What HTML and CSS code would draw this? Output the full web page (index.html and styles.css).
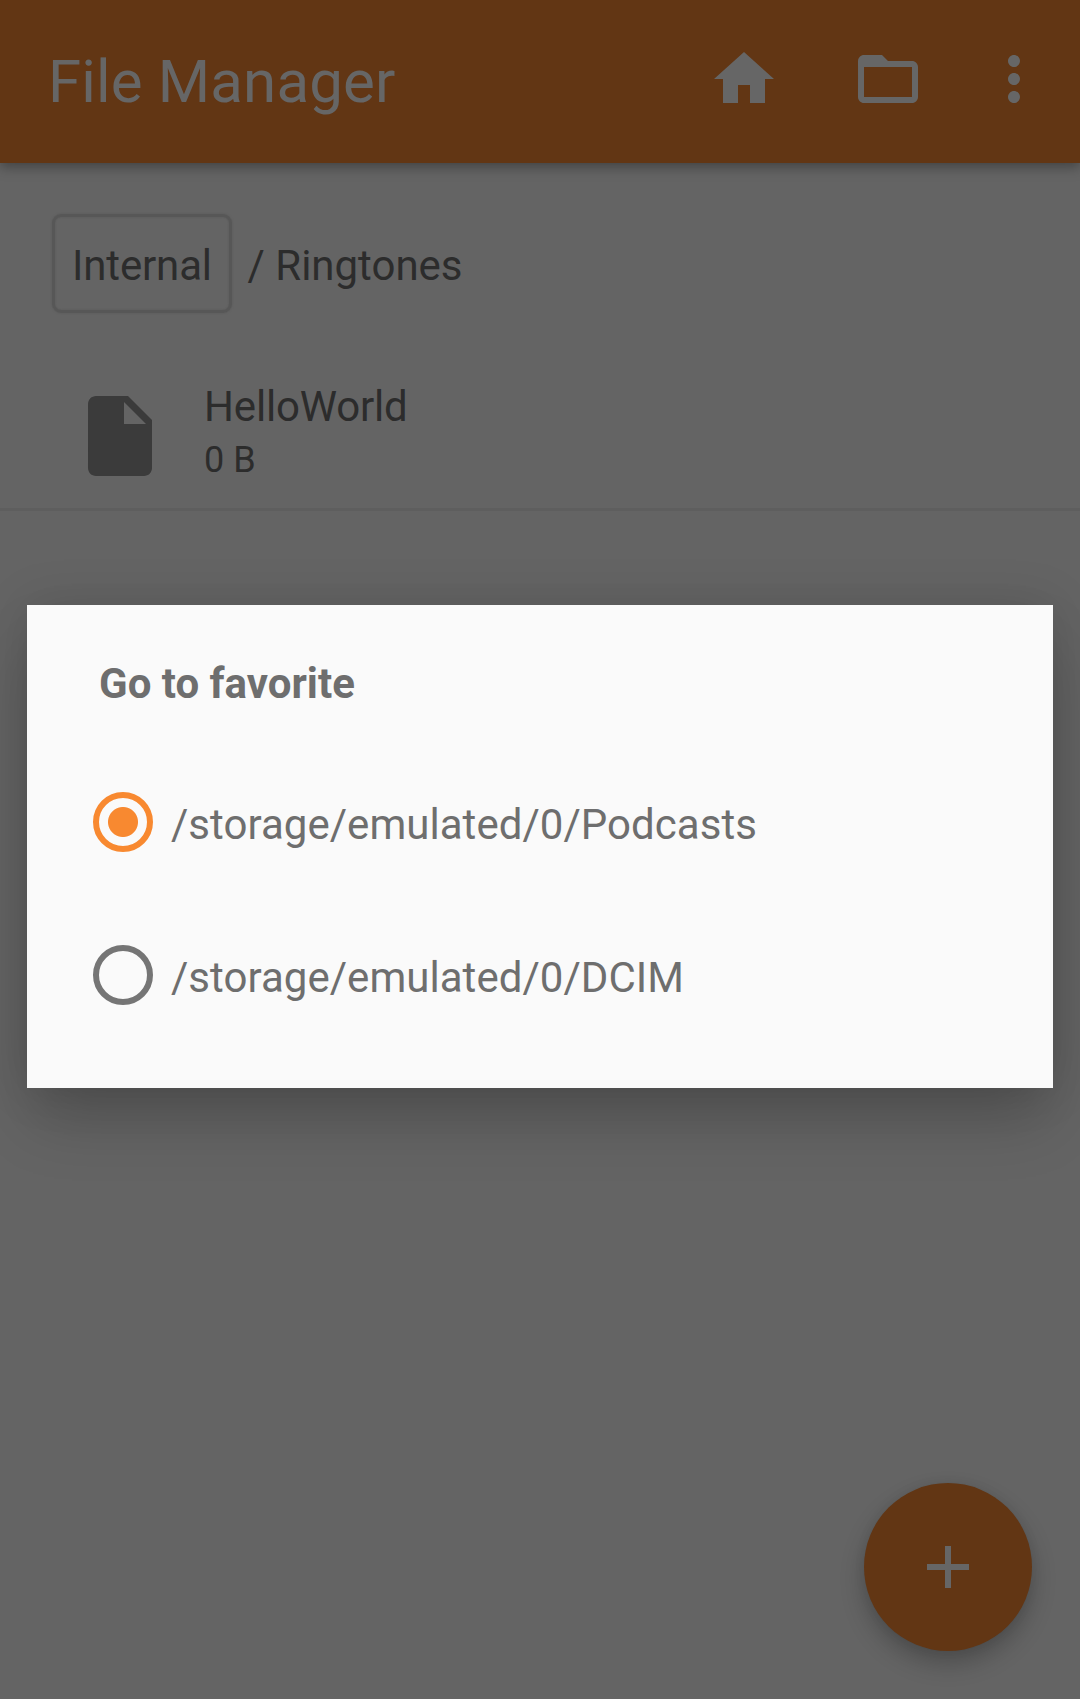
FILE: index.html
```html
<!DOCTYPE html>
<html lang="en">
<head>
<meta charset="utf-8">
<title>File Manager</title>
<link rel="stylesheet" href="styles.css">
</head>
<body>
<div class="screen">
  <header class="app-bar">
    <h1 class="app-title">File Manager</h1>
    <nav class="actions">
      <svg class="action-icon" viewBox="0 0 24 24"><path d="M10 20v-6h4v6h5v-8h3L12 3 2 12h3v8z"/></svg>
      <svg class="action-icon" viewBox="0 0 24 24"><path d="M20 6h-8l-2-2H4c-1.100 0-1.990.9-1.990 2L2 18c0 1.100.9 2 2 2h16c1.100 0 2-.9 2-2V8c0-1.100-.9-2-2-2zm0 12H4V8h16v10z"/></svg>
      <svg class="action-icon overflow-icon" viewBox="0 0 24 24"><path d="M12 8c1.100 0 2-.9 2-2s-.9-2-2-2-2 .9-2 2 .9 2 2 2zm0 2c-1.100 0-2 .9-2 2s.9 2 2 2 2-.9 2-2-.9-2-2-2zm0 6c-1.100 0-2 .9-2 2s.9 2 2 2 2-.9 2-2-.9-2-2-2z"/></svg>
    </nav>
  </header>
  <main class="content">
    <div class="breadcrumb">
      <span class="crumb-button">Internal</span>
      <span class="crumb-path">/ Ringtones</span>
    </div>
    <div class="file-row">
      <svg class="file-icon" viewBox="0 0 24 24"><path d="M6 2c-1.100 0-1.990.9-1.990 2L4 20c0 1.100.89 2 1.990 2H18c1.100 0 2-.9 2-2V8l-6-6H6zm7 7V3.500L18.500 9H13z"/></svg>
      <div class="file-text">
        <div class="file-name">HelloWorld</div>
        <div class="file-size">0 B</div>
      </div>
    </div>
  </main>
  <div class="fab"><svg class="fab-icon" viewBox="0 0 24 24"><path d="M19 13h-6v6h-2v-6H5v-2h6V5h2v6h6v2z"/></svg></div>
</div>
<div class="scrim">
  <section class="dialog">
    <h2 class="dialog-title">Go to favorite</h2>
    <div class="option">
      <span class="radio radio-checked"></span>
      <span class="option-label">/storage/emulated/0/Podcasts</span>
    </div>
    <div class="option">
      <span class="radio"></span>
      <span class="option-label">/storage/emulated/0/DCIM</span>
    </div>
  </section>
</div>
</body>
</html>
```
FILE: styles.css
```css
* { box-sizing: border-box; }

body {
  margin: 0;
  font-family: Roboto, sans-serif;
  font-size: 42px;
  line-height: 50px;
}

.screen {
  position: relative;
  height: 1699px;
  background: #646464;
  color: #2c2c2c;
  overflow: hidden;
}

.app-bar {
  position: relative;
  display: flex;
  justify-content: space-between;
  height: 163px;
  padding: 43px 30px 0 48px;
  background: #623614;
  color: #666;
  box-shadow: 0 4px 12px rgba(0, 0, 0, .34);
}

.app-title {
  margin: 3px 0 0;
  font-size: 60px;
  font-weight: 400;
  line-height: 72px;
  letter-spacing: .15px;
}

.actions { display: flex; gap: 72px; }
.action-icon { width: 72px; height: 72px; fill: currentColor; }
.overflow-icon { margin-left: -18px; }

.breadcrumb {
  display: flex;
  align-items: center;
  gap: 16px;
  padding: 51px 52px 0;
}

.crumb-button {
  height: 99px;
  width: 180px;
  padding: 24px 0 0 17px;
  border: 3px solid #575757;
  border-radius: 9px;
  box-shadow: 0 0 2px #575757, inset 0 0 2px #575757;
  letter-spacing: -.15px;
}

.crumb-path { padding-top: 5px; margin-left: -.5px; }

.file-row {
  display: flex;
  height: 198px;
  padding: 75px 0 0 72px;
  border-bottom: 3px solid #5e5e5e;
}

.file-icon { width: 96px; height: 96px; fill: #3b3b3b; }
.file-text { margin: -6px 0 0 36px; }
.file-name { letter-spacing: -.17px; }
.file-size { margin-top: 3px; font-size: 36px; }

.fab {
  position: absolute;
  left: 864px;
  top: 1483px;
  display: grid;
  place-items: center;
  width: 168px;
  height: 168px;
  border-radius: 50%;
  background: #623614;
  box-shadow: 0 12px 24px rgba(0, 0, 0, .24), 0 0 12px rgba(0, 0, 0, .06);
}

.fab-icon { width: 72px; height: 72px; fill: #666; }

.scrim {
  position: absolute;
  inset: 0;
  height: 1699px;
  padding: 605px 27px 0;
  overflow: hidden;
}

.dialog {
  height: 483px;
  padding: 54px 66px 0;
  background: #fafafa;
  color: #6e6e6e;
  box-shadow: 0 36px 60px -6px rgba(0, 0, 0, .2), 0 0 48px rgba(0, 0, 0, .12);
}

.dialog-title {
  margin: 0 0 36px 6px;
  font-size: 42px;
  font-weight: 700;
}

.option {
  display: flex;
  align-items: center;
  gap: 18px;
  height: 153px;
}

.radio {
  width: 60px;
  height: 60px;
  border: 6px solid #757575;
  border-radius: 50%;
}

.radio-checked {
  border-color: #f88930;
  background: radial-gradient(circle, #f88930 14.500px, transparent 15.500px);
}

.option-label { padding-top: 6px; letter-spacing: .04px; }
```
